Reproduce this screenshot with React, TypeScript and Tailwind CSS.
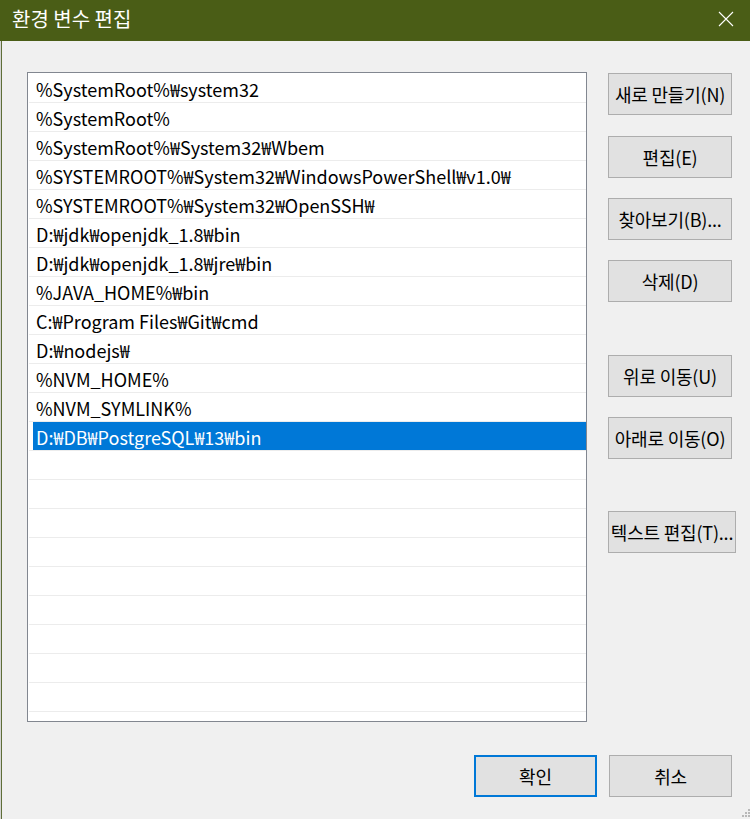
import React from 'react';

const paths = [
  '%SystemRoot%₩system32',
  '%SystemRoot%',
  '%SystemRoot%₩System32₩Wbem',
  '%SYSTEMROOT%₩System32₩WindowsPowerShell₩v1.0₩',
  '%SYSTEMROOT%₩System32₩OpenSSH₩',
  'D:₩jdk₩openjdk_1.8₩bin',
  'D:₩jdk₩openjdk_1.8₩jre₩bin',
  '%JAVA_HOME%₩bin',
  'C:₩Program Files₩Git₩cmd',
  'D:₩nodejs₩',
  '%NVM_HOME%',
  '%NVM_SYMLINK%',
  'D:₩DB₩PostgreSQL₩13₩bin',
];

const SELECTED = 12;
const TOTAL_ROWS = 22;

function Button({ label, className = '' }: { label: string; className?: string }) {
  return (
    <div
      className={`flex h-[42px] items-center justify-center whitespace-nowrap border border-[#adadad] bg-[#e1e1e1] text-[18px] tracking-[-0.2px] text-black ${className}`}
    >
      {label}
    </div>
  );
}

export default function App() {
  const rows = Array.from({ length: TOTAL_ROWS }, (_, i) => paths[i] ?? '');

  return (
    <div
      className="flex h-[819px] w-[750px] overflow-hidden bg-[#f0f0f0]"
      style={{ fontFamily: '"Noto Sans CJK KR", "Noto Sans", sans-serif' }}
    >
      {/* left window edge */}
      <div className="w-px bg-[#d4d4d4]" />
      <div className="w-px bg-[#5f6e38]" />

      <div className="flex flex-1 flex-col">
        {/* Title bar */}
        <div className="-ml-[2px] flex h-[41px] items-center justify-between bg-[#4a5d16] pl-[12px] pr-[14px] text-white">
          <span className="pb-[3px] text-[20px] leading-none">환경 변수 편집</span>
          <svg width="16" height="16" viewBox="0 0 16 16" className="mb-[3px] mr-[2px]">
            <path d="M1 1 L15 15 M15 1 L1 15" stroke="white" strokeWidth="1.1" fill="none" />
          </svg>
        </div>

        {/* Body */}
        <div className="flex pl-[25px] pt-[31px]">
          {/* List box */}
          <div className="h-[650px] w-[560px] overflow-hidden border border-[#828790] bg-white pt-px">
            {rows.map((p, i) => (
              <div key={i} className="flex h-[29px] flex-col">
                <div
                  className={`ml-[5px] flex h-[28px] items-center whitespace-nowrap pl-[3px] pt-[2px] text-[18px] leading-none ${
                    i === SELECTED ? 'bg-[#0078d7] text-white' : 'text-black'
                  }`}
                >
                  {p}
                </div>
                <div className="ml-px h-px bg-[#ececec]" />
              </div>
            ))}
          </div>

          {/* Side buttons */}
          <div className="ml-[21px] flex flex-col pt-px">
            <Button label="새로 만들기(N)" className="w-[124px]" />
            <Button label="편집(E)" className="mt-[21px] w-[124px]" />
            <Button label="찾아보기(B)..." className="mt-[20px] w-[124px]" />
            <Button label="삭제(D)" className="mt-[20px] w-[124px]" />
            <Button label="위로 이동(U)" className="mt-[53px] w-[124px]" />
            <Button label="아래로 이동(O)" className="mt-[20px] w-[124px]" />
            <Button label="텍스트 편집(T)..." className="mt-[52px] w-[128px]" />
          </div>
        </div>

        {/* Bottom buttons */}
        <div className="flex justify-end gap-[12px] pr-[18px] pt-[33px]">
          <div className="flex h-[42px] w-[123px] items-center justify-center border-2 border-[#0078d7] bg-[#e1e1e1] text-[18px]">
            확인
          </div>
          <Button label="취소" className="w-[123px]" />
        </div>

        {/* resize grip */}
        <div className="mt-auto flex justify-end">
          <svg width="8" height="10" viewBox="0 0 8 10">
            <rect x="6" y="0" width="2" height="2" fill="#b8b8b8" />
            <rect x="3" y="3" width="2" height="2" fill="#b8b8b8" />
            <rect x="6" y="3" width="2" height="2" fill="#b8b8b8" />
            <rect x="0" y="6" width="2" height="2" fill="#b8b8b8" />
            <rect x="3" y="6" width="2" height="2" fill="#b8b8b8" />
            <rect x="6" y="6" width="2" height="2" fill="#b8b8b8" />
          </svg>
        </div>
      </div>
    </div>
  );
}
